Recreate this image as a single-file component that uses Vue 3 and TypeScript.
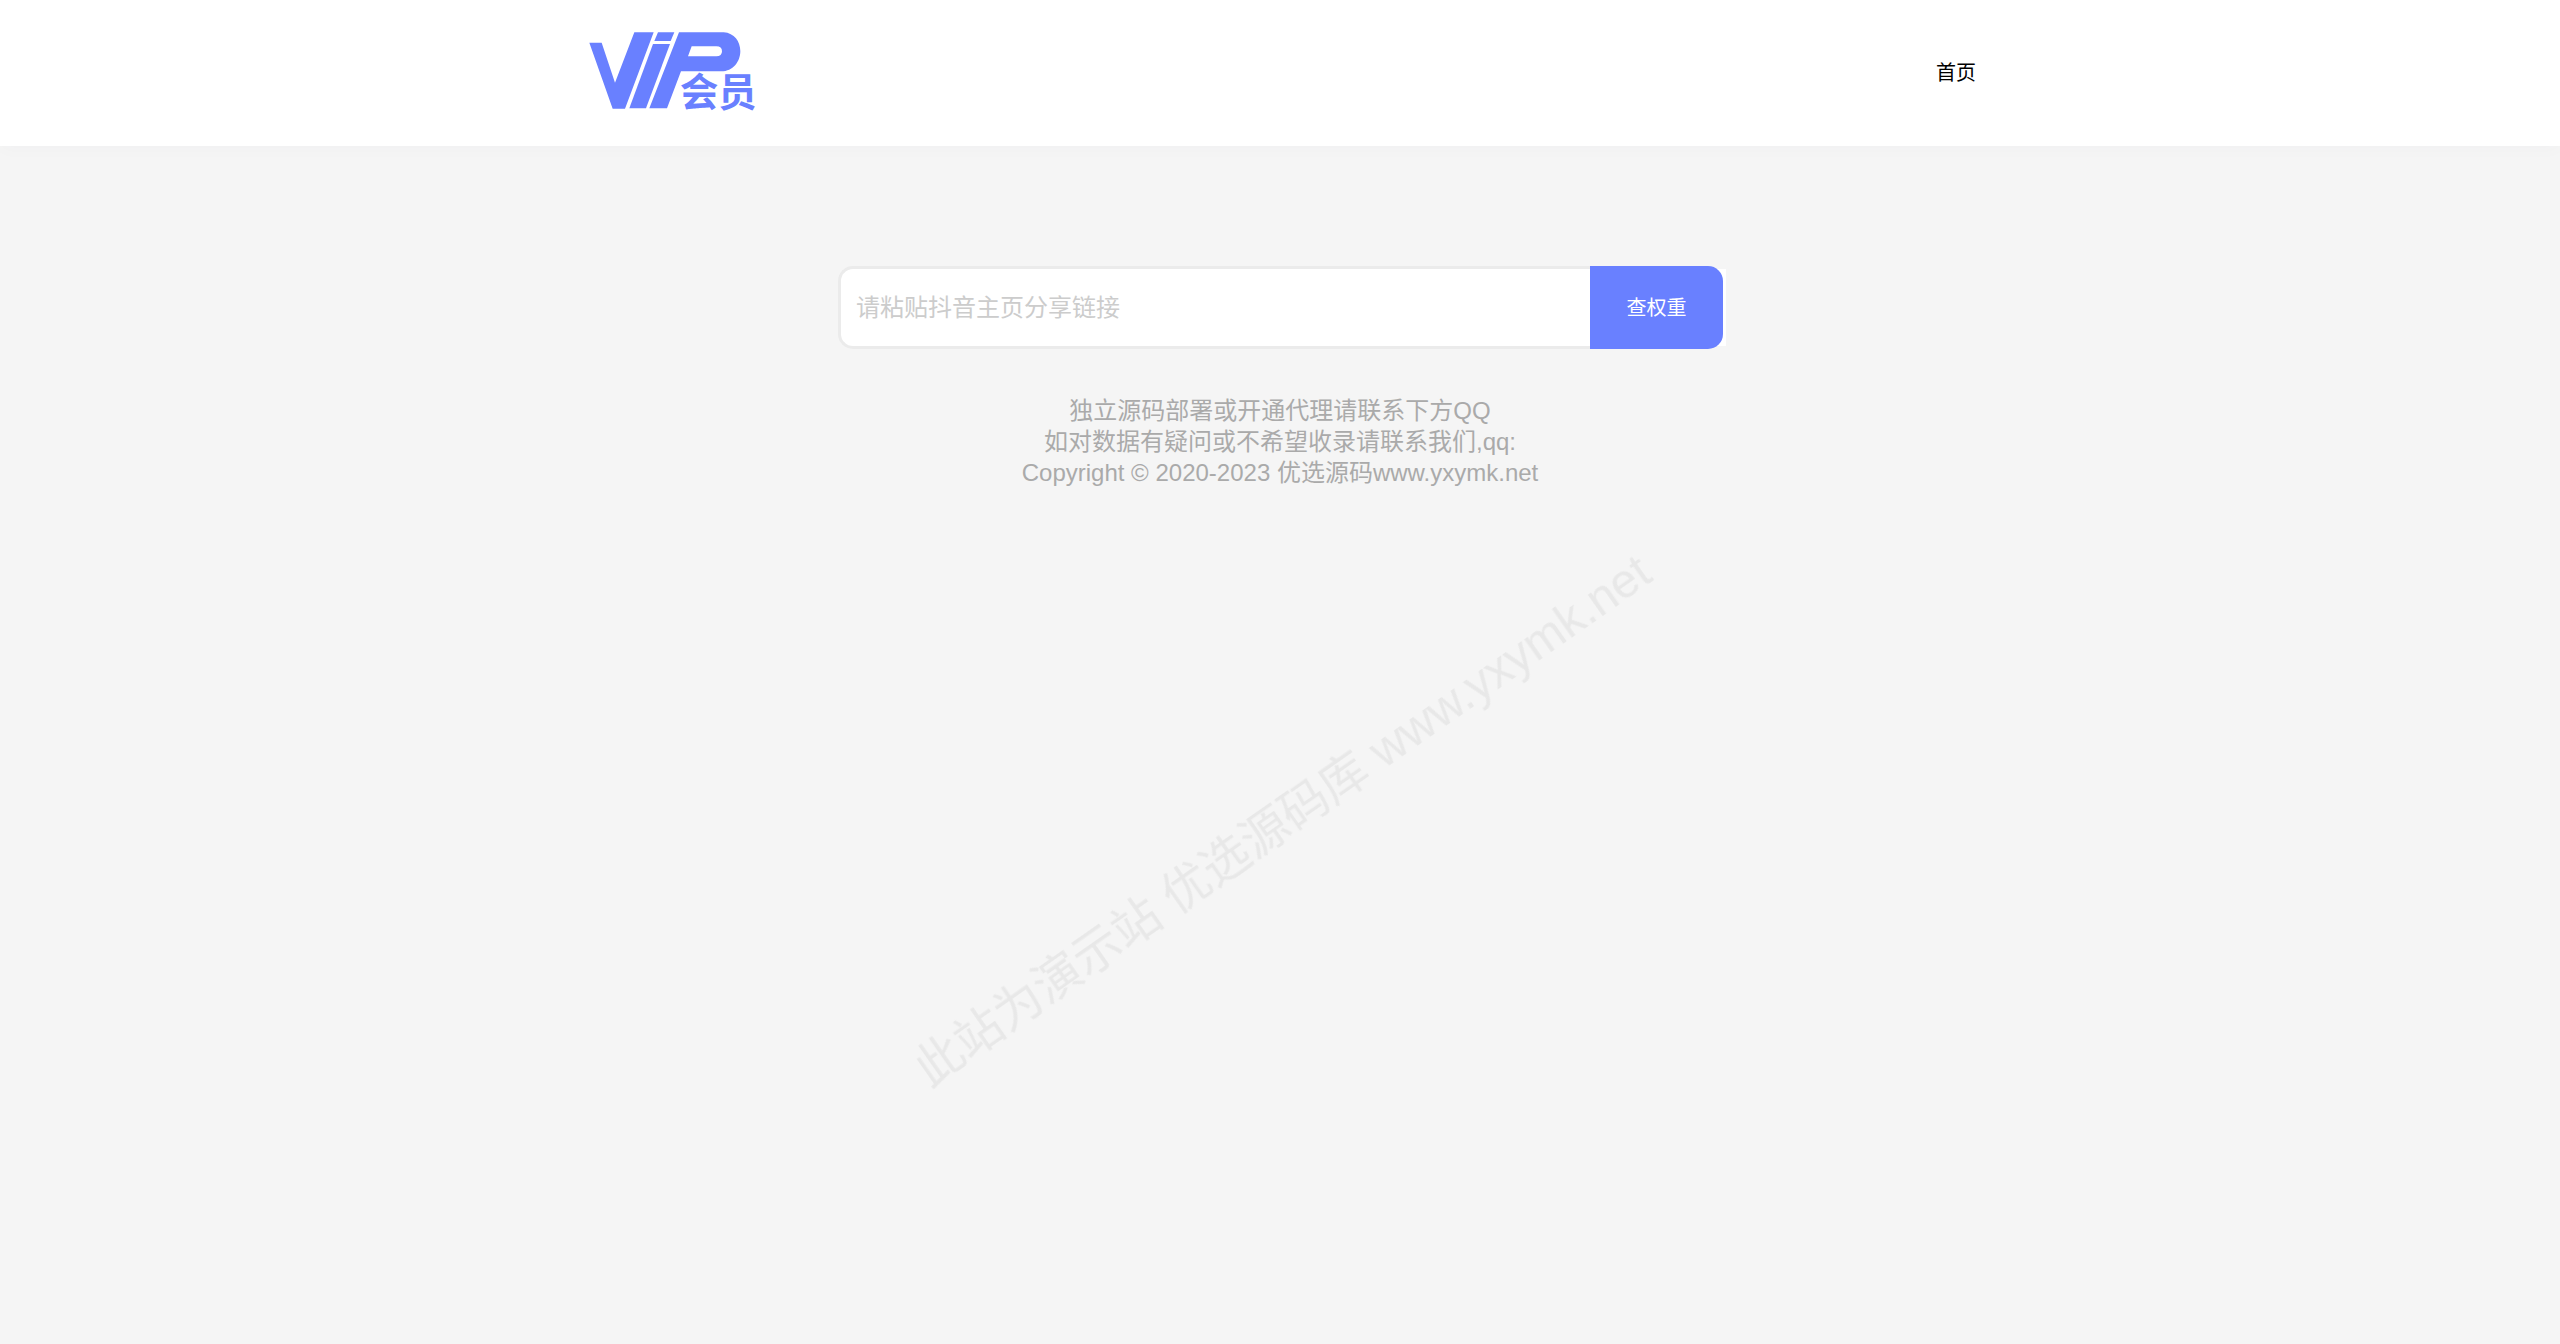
<script setup lang="ts">
import { ref } from 'vue'

const shareLink = ref('')
const notes: string[] = [
  '独立源码部署或开通代理请联系下方QQ',
  '如对数据有疑问或不希望收录请联系我们,qq:',
  'Copyright © 2020-2023 优选源码www.yxymk.net',
]
</script>

<template>
  <div class="page">
    <header class="header">
      <div class="bar">
        <a class="logo" href="#" aria-label="VIP会员">
          <svg viewBox="58 50 516 276" width="172" height="92" fill="#6980ff" aria-hidden="true">
            <path d="M59 97H96L136 217L194 66H252L166 295H129Z" />
            <path d="M265 66H314L303 92H254Z" />
            <path d="M250 101H301L229 294H179Z" />
            <path
              fill-rule="evenodd"
              d="M328 66H462C494 68 512 94 512 122C512 154 490 183 455 183H334L292 294H239ZM366 108H440Q457 108 457 123Q457 138 440 138H355Z"
            />
            <text x="331" y="286" class="logo-text">会员</text>
          </svg>
        </a>
        <nav><a class="nav-link" href="#">首页</a></nav>
      </div>
    </header>

    <main class="main">
      <form class="search" @submit.prevent>
        <input v-model="shareLink" class="field" type="text" placeholder="请粘贴抖音主页分享链接" aria-label="请粘贴抖音主页分享链接" />
        <div class="action"><button class="submit" type="submit">查权重</button></div>
      </form>
      <footer class="notes">
        <p v-for="note in notes" :key="note">{{ note }}</p>
      </footer>
    </main>

    <div class="watermark">此站为演示站 优选源码库 www.yxymk.net</div>
  </div>
</template>

<style>
body {
  background: #f5f5f5;
}
</style>

<style scoped>
.page {
  min-height: 100vh;
  font-family: "Liberation Sans", "Noto Sans CJK SC", sans-serif;
}

.header {
  background: #fff;
  box-shadow: 0 4px 16px rgba(0, 60, 120, 0.02);
}

.bar {
  display: flex;
  align-items: center;
  justify-content: space-between;
  box-sizing: border-box;
  max-width: 1400px;
  height: 146px;
  margin: 0 auto;
  padding: 0 4px 0 9px;
}

.logo {
  display: block;
}

.logo svg {
  display: block;
}

.logo-text {
  font-family: "Noto Sans CJK SC", sans-serif;
  font-size: 115px;
  font-weight: 700;
}

.nav-link {
  color: #000;
  font-size: 20px;
  line-height: 28px;
  text-decoration: none;
}

.main {
  padding: 120px 20px 0;
}

.search {
  display: flex;
  box-sizing: border-box;
  max-width: 892px;
  height: 83px;
  margin: 0 auto;
  padding-left: 4px;
}

.field {
  flex: 1;
  min-width: 0;
  box-sizing: border-box;
  padding: 0 15px;
  border: 3px solid #ebebeb;
  border-right: 0;
  border-radius: 15px 0 0 15px;
  outline: none;
  background: #fff;
  color: #333;
  font-family: inherit;
  font-size: 24px;
}

.field::placeholder {
  color: #ccc;
  opacity: 1;
}

.action {
  padding-right: 3px;
  background: linear-gradient(#fff, #fff) 0 3px / 100% 77px no-repeat;
}

.submit {
  width: 133px;
  height: 83px;
  padding: 0 0 2px;
  border: 0;
  border-radius: 0 15px 15px 0;
  background: #6980ff;
  color: #fff;
  font-family: inherit;
  font-size: 20px;
}

.notes {
  margin-top: 46px;
  color: #aaa;
  font-size: 24px;
  line-height: 31px;
  text-align: center;
}

.notes p {
  margin: 0;
}

.watermark {
  position: fixed;
  top: 61%;
  left: 50%;
  padding: 4px 0 0 4px;
  color: #e8e8e8;
  font-size: 48px;
  line-height: 56px;
  white-space: nowrap;
  pointer-events: none;
  transform: translate(-50%, -50%) rotate(-35deg);
}
</style>
